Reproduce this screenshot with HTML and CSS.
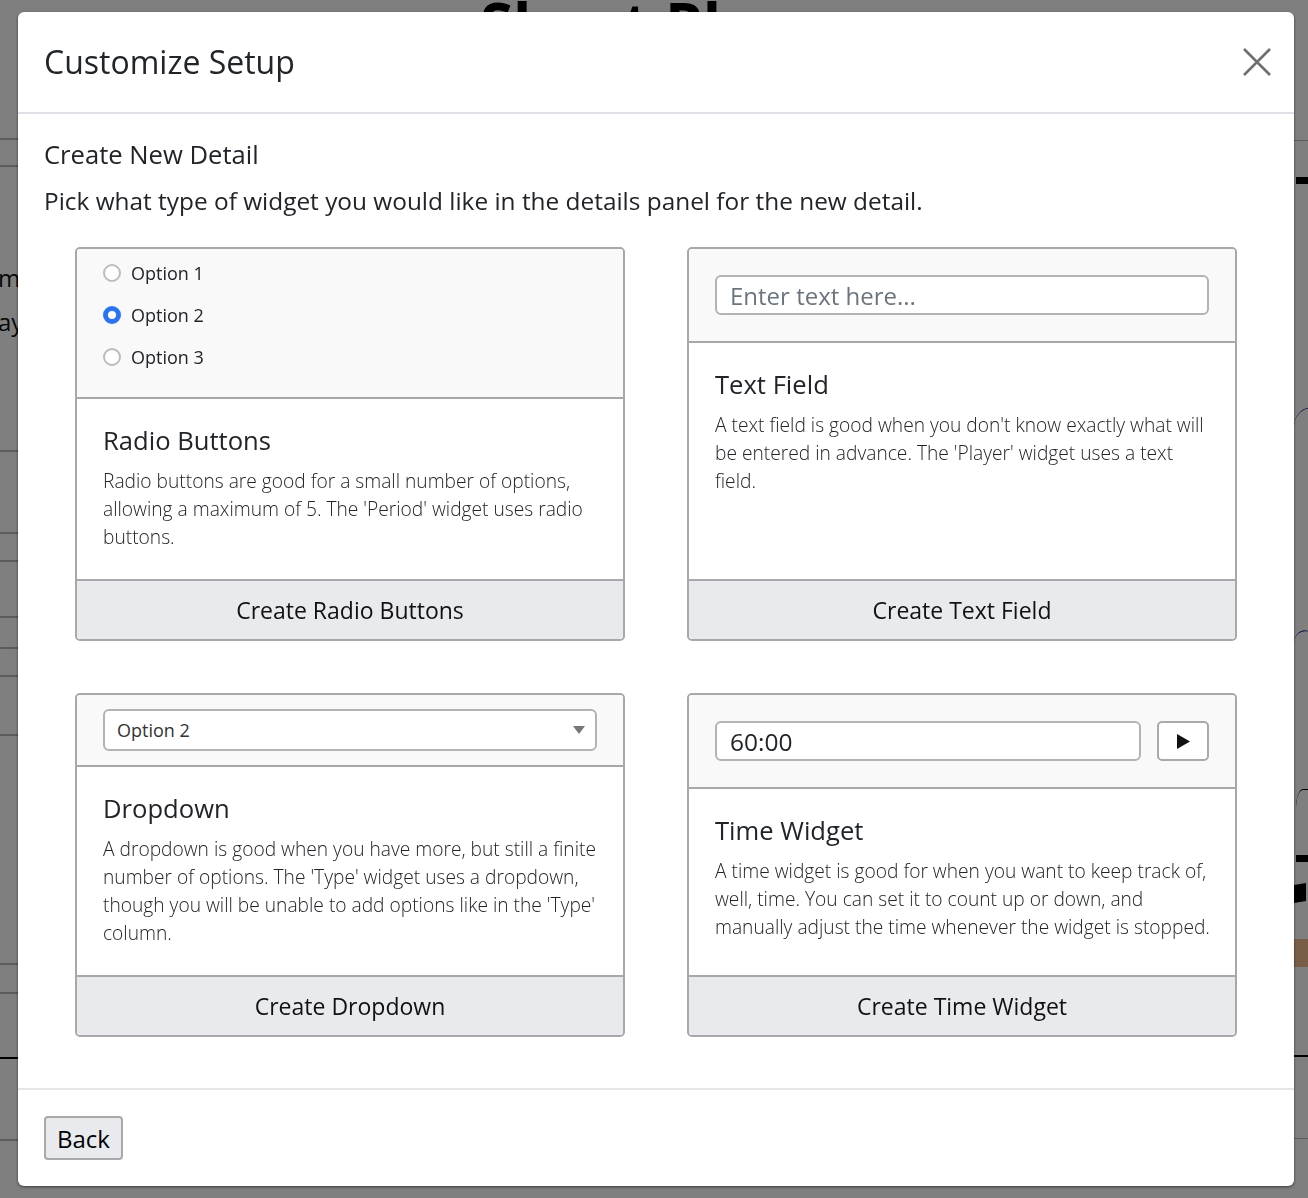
FILE: index.html
```html
<!DOCTYPE html>
<html lang="en">
<head>
<meta charset="utf-8">
<title>Customize Setup</title>
<link rel="stylesheet" href="styles.css">
</head>
<body>
<div class="page">
  <div class="bg-left">
    <div class="bg-row r1"></div>
    <div class="bg-row r2"></div>
    <div class="bg-row r3"><span class="bg-text">m</span><span class="bg-text">ay</span></div>
    <div class="bg-row r4"></div>
    <div class="bg-row r5"></div>
    <div class="bg-row r6"></div>
    <div class="bg-row r7"></div>
    <div class="bg-row r8"></div>
    <div class="bg-row r9"></div>
    <div class="bg-row r10"></div>
    <div class="bg-row r11"></div>
    <div class="bg-row r12 dark"></div>
    <div class="bg-row r13"></div>
  </div>
  <h1 class="page-title">Sheet Player</h1>
  <div class="bg-right">
    <div class="bg-r-line"></div>
    <div class="bg-r-bar"></div>
    <div class="bg-r-curve c1"></div>
    <div class="bg-r-curve c2"></div>
    <div class="bg-r-arc"></div>
    <div class="bg-r-bar b2"></div>
    <div class="bg-r-chip"></div>
    <div class="bg-r-brown"></div>
    <div class="bg-r-line l2"></div>
    <div class="bg-r-line l3"></div>
  </div>
</div>
<div class="backdrop"></div>

<div class="modal" role="dialog">
  <div class="modal-header">
    <h2 class="modal-title">Customize Setup</h2>
    <button class="close" aria-label="Close">
      <svg width="28" height="28" viewBox="0 0 28 28"><path d="M1 1 L27 27 M27 1 L1 27" stroke="#6f6f6f" stroke-width="2.6" fill="none" stroke-linecap="butt"/></svg>
    </button>
  </div>
  <div class="modal-body">
    <h3 class="section-title">Create New Detail</h3>
    <p class="section-lead">Pick what type of widget you would like in the details panel for the new detail.</p>
    <div class="cards">
      <div class="card">
        <div class="card-preview preview-radios">
          <label class="radio"><span class="radio-dot"></span><span class="radio-label">Option 1</span></label>
          <label class="radio"><span class="radio-dot checked"></span><span class="radio-label">Option 2</span></label>
          <label class="radio"><span class="radio-dot"></span><span class="radio-label">Option 3</span></label>
        </div>
        <div class="card-body">
          <h4 class="card-title">Radio Buttons</h4>
          <p class="card-text">Radio buttons are good for a small number of options, allowing a maximum of 5. The 'Period' widget uses radio buttons.</p>
        </div>
        <button class="card-action">Create Radio Buttons</button>
      </div>

      <div class="card">
        <div class="card-preview">
          <input class="text-input" type="text" placeholder="Enter text here...">
        </div>
        <div class="card-body">
          <h4 class="card-title">Text Field</h4>
          <p class="card-text">A text field is good when you don't know exactly what will be entered in advance. The 'Player' widget uses a text field.</p>
        </div>
        <button class="card-action">Create Text Field</button>
      </div>

      <div class="card">
        <div class="card-preview preview-select">
          <div class="select"><span>Option 2</span>
            <svg width="12" height="8" viewBox="0 0 12 8"><path d="M0 0 H12 L6 8 Z" fill="#777"/></svg>
          </div>
        </div>
        <div class="card-body">
          <h4 class="card-title">Dropdown</h4>
          <p class="card-text">A dropdown is good when you have more, but still a finite number of options. The 'Type' widget uses a dropdown, though you will be unable to add options like in the 'Type' column.</p>
        </div>
        <button class="card-action">Create Dropdown</button>
      </div>

      <div class="card">
        <div class="card-preview">
          <div class="time-row">
            <input class="text-input time-input" type="text" value="60:00">
            <button class="play" aria-label="Start">
              <svg width="13" height="15" viewBox="0 0 13 15"><path d="M0 0 L13 7.5 L0 15 Z" fill="#111"/></svg>
            </button>
          </div>
        </div>
        <div class="card-body">
          <h4 class="card-title">Time Widget</h4>
          <p class="card-text">A time widget is good for when you want to keep track of, well, time. You can set it to count up or down, and manually adjust the time whenever the widget is stopped.</p>
        </div>
        <button class="card-action">Create Time Widget</button>
      </div>
    </div>
  </div>
  <div class="modal-footer">
    <button class="back">Back</button>
  </div>
</div>
</body>
</html>
```
FILE: styles.css
```css
* { box-sizing: border-box; }
html, body { margin: 0; height: 100%; }
body {
  font-family: "Open Sans", "Noto Sans", sans-serif;
  color: #212529;
  background: #fff;
  overflow: hidden;
}

/* page behind the dialog */
.page { height: 1198px; display: flex; }
.bg-left { width: 60px; display: flex; flex-direction: column; flex: none; }
.bg-row { border-bottom: 2px solid #b8b8b8; flex: none; }
.bg-row.dark { border-bottom-color: #000; }
.r1 { height: 140px; }
.r2 { height: 27px; }
.r3 { height: 285px; padding-top: 89px; display: flex; flex-direction: column; font-size: 24px; line-height: 44px; }
.bg-text { margin-left: -2px; color: #111; }
.r4 { height: 82px; }
.r5 { height: 28px; }
.r6 { height: 56px; }
.r7 { height: 31px; }
.r8 { height: 28px; }
.r9 { height: 59px; }
.r10 { height: 229px; }
.r11 { height: 29px; }
.r12 { height: 65px; }
.r13 { height: 82px; }
.page-title { flex: 1; margin: -12px 0 0 420px; font-size: 60px; font-weight: 700; color: #000; line-height: 1.2; white-space: nowrap; }
.bg-right { width: 14px; display: flex; flex-direction: column; flex: none; }
.bg-r-line { height: 141px; border-bottom: 1px solid #b8b8b8; }
.bg-r-line.l2 { height: 90px; border-bottom: 2px solid #000; }
.bg-r-line.l3 { height: 82px; }
.bg-r-bar { height: 7px; margin-top: 36px; background: #000; margin-left: 2px; }
.bg-r-bar.b2 { margin-top: 36px; }
.bg-r-curve { height: 16px; margin-top: 225px; border-top: 1px solid #1c2f8c; border-radius: 100% 0 0 0; transform: skewY(-12deg); }
.bg-r-curve.c2 { margin-top: 204px; transform: skewY(12deg); }
.bg-r-arc { height: 30px; margin-top: 144px; border-top: 1px solid #000; border-radius: 60% 0 0 0; margin-left: 2px; }
.bg-r-chip { height: 18px; width: 12px; margin-top: 22px; background: #000; transform: skewY(-10deg); }
.bg-r-brown { height: 28px; margin-top: 37px; background: #f0bc8f; }

.backdrop { position: fixed; inset: 0; background: rgba(0, 0, 0, 0.5); }

/* dialog */
.modal {
  position: fixed;
  top: 12px;
  left: 18px;
  width: 1276px;
  background: #fff;
  border-radius: 6px;
  box-shadow: 0 1px 3px rgba(0, 0, 0, 0.55);
  display: flex;
  flex-direction: column;
}
.modal-header {
  display: flex;
  align-items: center;
  justify-content: space-between;
  padding: 26px;
  border-bottom: 2px solid #dee2e6;
}
.modal-title { margin: 0; font-size: 32px; line-height: 48px; font-weight: 400; color: #212529; }
.close { background: none; border: 0; padding: 0; margin-right: -3px; width: 28px; height: 28px; display: flex; cursor: pointer; }

.modal-body { padding: 26px 26px 51px; }
.section-title { margin: 0; font-size: 25.6px; line-height: 30px; font-weight: 400; }
.section-lead { margin: 13px 0 28px; font-size: 24.4px; line-height: 36px; font-weight: 400; }

.cards {
  display: grid;
  grid-template-columns: 550px 550px;
  gap: 52px 62px;
  padding: 0 31px;
}
.card {
  border: 2px solid #a8a8a8;
  border-radius: 5px;
  overflow: hidden;
  display: flex;
  flex-direction: column;
  background: #fff;
}
.card-preview {
  background: #f9f9f9;
  border-bottom: 2px solid #a8a8a8;
  padding: 26px;
}
.preview-radios { padding: 10px 26px 26px; display: flex; flex-direction: column; gap: 14px; }
.preview-select { padding: 14px 26px; }

.radio { display: flex; align-items: center; gap: 10px; height: 28px; font-size: 18px; color: #212529; }
.radio-dot { width: 18px; height: 18px; border-radius: 50%; border: 2px solid #bcbcbc; background: #fff; flex: none; }
.radio-dot.checked { border: 5px solid #2b73f4; }

.text-input {
  display: block;
  width: 100%;
  height: 40px;
  border: 2px solid #b3b3b3;
  border-radius: 6px;
  padding: 0 13px;
  font-family: inherit;
  font-size: 24px;
  color: #212529;
  background: #fff;
  outline: none;
}
.text-input::placeholder { color: #6c757d; }
.time-row { display: flex; gap: 16px; }
.time-input { flex: 1; width: auto; font-size: 24.5px; }
.play {
  width: 52px;
  height: 40px;
  border: 2px solid #aaa;
  border-radius: 5px;
  background: #fff;
  display: flex;
  align-items: center;
  justify-content: center;
  padding: 0 0 0 1px;
}
.select {
  height: 42px;
  border: 2px solid #b3b3b3;
  border-radius: 6px;
  background: #fff;
  padding: 0 10px 0 12px;
  display: flex;
  align-items: center;
  justify-content: space-between;
  font-size: 18px;
  color: #333;
}

.card-body { flex: 1; padding: 26px 16px 28px 26px; }
.card-title { margin: 0 0 10px; font-size: 25.6px; line-height: 32px; font-weight: 400; color: #212529; }
.card-text { margin: 0; font-size: 19.2px; line-height: 28px; font-weight: 300; color: #212529; }

.card-action {
  height: 60px;
  border: 0;
  border-top: 2px solid #a8a8a8;
  background: #e9eaee;
  font-family: inherit;
  font-size: 23px;
  color: #111;
  padding: 0;
  cursor: pointer;
}

.modal-footer { border-top: 2px solid #e6e6e6; padding: 26px; }
.back {
  height: 44px;
  padding: 0 11px;
  border: 2px solid #a9a9a9;
  border-radius: 4px;
  background: #e9eaee;
  font-family: inherit;
  font-size: 24px;
  color: #000;
}
```
